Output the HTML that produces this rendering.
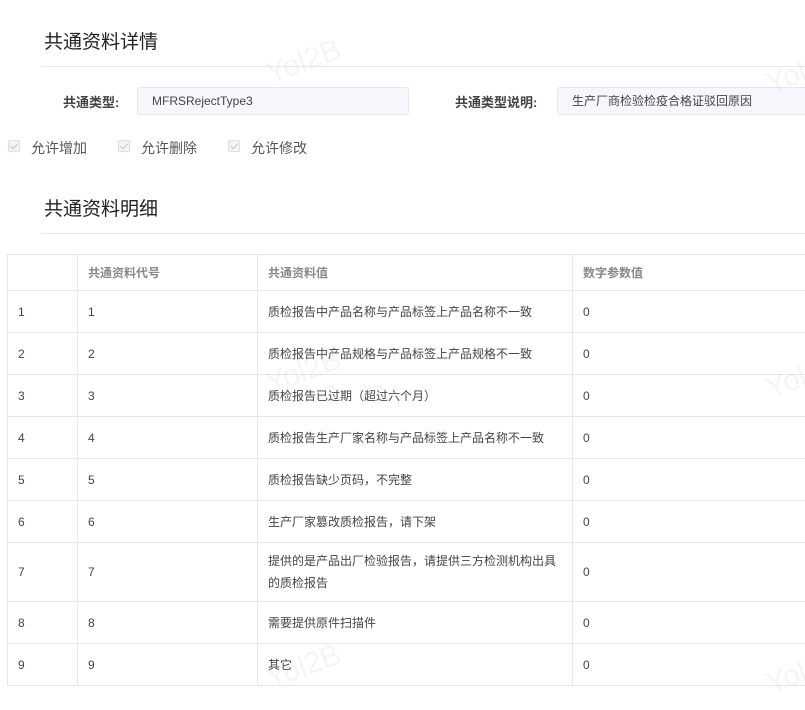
<!DOCTYPE html>
<html><head><meta charset="utf-8"><style>
*{margin:0;padding:0;box-sizing:border-box}
body{width:805px;height:710px;background:#fff;font-family:"Liberation Sans","Noto Sans CJK SC",sans-serif;color:#333;position:relative;overflow:hidden}
.a{position:absolute;white-space:nowrap}
h2{position:absolute;font-size:19px;font-weight:400;color:#222;left:44px}
.hr{position:absolute;left:41px;right:0;height:1px;background:#e8e8e8}
.lbl{font-size:13px;font-weight:bold;color:#444}
.inp{position:absolute;height:28px;background:#f5f7fa;border:1px solid #e4e7ed;border-radius:3px;font-size:12px;color:#444;padding-left:14px;line-height:26px}
.cb{position:absolute;width:12px;height:12px;border:1px solid #dcdfe6;background:#f2f4f7;border-radius:2px}
.cb:after{content:"";position:absolute;left:3px;top:1px;width:3px;height:6px;border:solid #c0c4cc;border-width:0 1px 1px 0;transform:rotate(45deg)}
.ct{font-size:14px;color:#555}
table{position:absolute;left:7px;top:254px;width:820px;border-collapse:collapse;font-size:12px;color:#444}
td,th{border:1px solid #e4e7ed;text-align:left;padding:0 10px;font-weight:normal}
th{color:#888;font-weight:bold;height:36px;font-size:12px}
td{height:42px}
.wm{position:absolute;font-size:30px;color:rgba(200,200,200,0.18);transform:rotate(-20deg);font-family:"Liberation Sans",sans-serif}
</style></head><body>
<h2 style="top:27px">共通资料详情</h2>
<div class="hr" style="top:66px"></div>
<div class="a lbl" style="left:63px;top:92px">共通类型:</div>
<div class="inp" style="left:137px;top:87px;width:272px">MFRSRejectType3</div>
<div class="a lbl" style="left:455px;top:92px">共通类型说明:</div>
<div class="inp" style="left:557px;top:87px;width:260px">生产厂商检验检疫合格证驳回原因</div>
<div class="cb" style="left:8px;top:140px"></div><div class="a ct" style="left:31px;top:138px">允许增加</div>
<div class="cb" style="left:118px;top:140px"></div><div class="a ct" style="left:141px;top:138px">允许删除</div>
<div class="cb" style="left:228px;top:140px"></div><div class="a ct" style="left:251px;top:138px">允许修改</div>
<h2 style="top:194px">共通资料明细</h2>
<div class="hr" style="top:233px"></div>
<table>
<tr><th style="width:70px"></th><th style="width:180px">共通资料代号</th><th style="width:315px">共通资料值</th><th>数字参数值</th></tr>
<tr><td>1</td><td>1</td><td>质检报告中产品名称与产品标签上产品名称不一致</td><td>0</td></tr>
<tr><td>2</td><td>2</td><td>质检报告中产品规格与产品标签上产品规格不一致</td><td>0</td></tr>
<tr><td>3</td><td>3</td><td>质检报告已过期（超过六个月）</td><td>0</td></tr>
<tr><td>4</td><td>4</td><td>质检报告生产厂家名称与产品标签上产品名称不一致</td><td>0</td></tr>
<tr><td>5</td><td>5</td><td>质检报告缺少页码，不完整</td><td>0</td></tr>
<tr><td>6</td><td>6</td><td>生产厂家篡改质检报告，请下架</td><td>0</td></tr>
<tr><td style="height:59px">7</td><td>7</td><td style="line-height:22px">提供的是产品出厂检验报告，请提供三方检测机构出具<br>的质检报告</td><td>0</td></tr>
<tr><td>8</td><td>8</td><td>需要提供原件扫描件</td><td>0</td></tr>
<tr><td>9</td><td>9</td><td>其它</td><td>0</td></tr>
</table>
<div class="wm" style="left:265px;top:45px">Yol2B</div>
<div class="wm" style="left:265px;top:355px">Yol2B</div>
<div class="wm" style="left:265px;top:650px">Yol2B</div>
<div class="wm" style="left:765px;top:55px">Yol2B</div>
<div class="wm" style="left:765px;top:360px">Yol2B</div>
<div class="wm" style="left:765px;top:655px">Yol2B</div>
</body></html>
